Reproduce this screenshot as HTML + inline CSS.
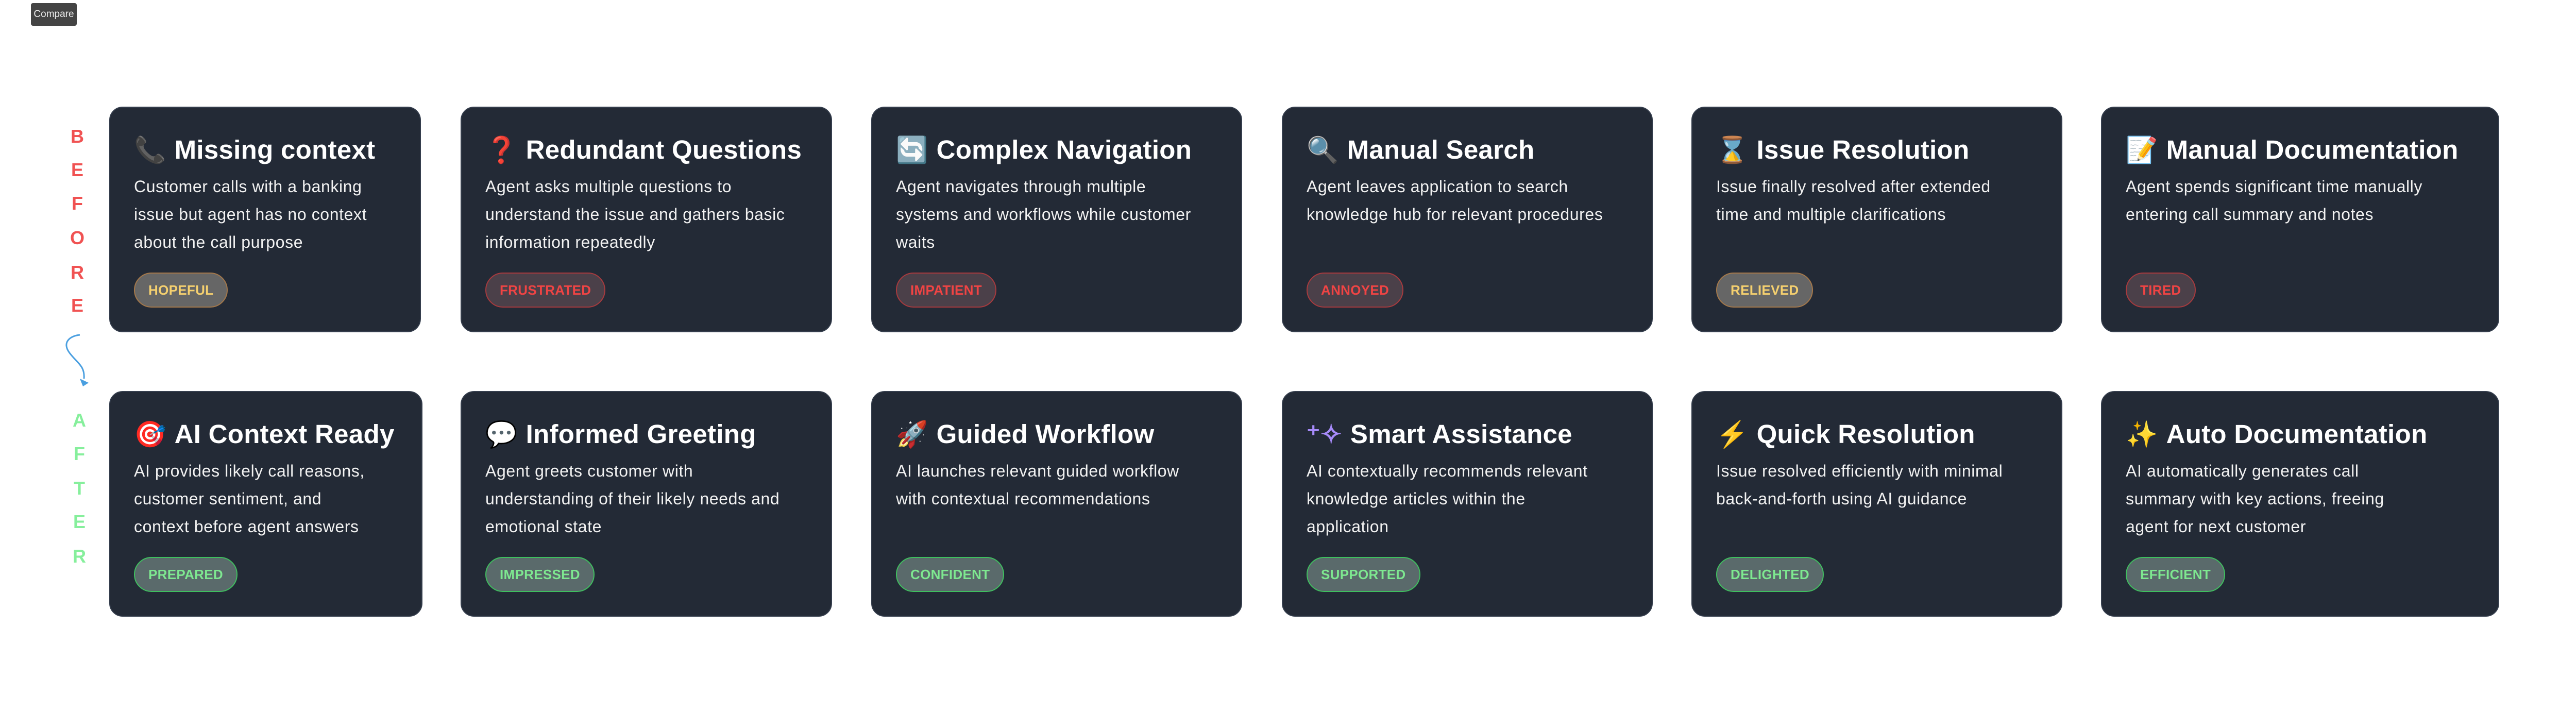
<!DOCTYPE html>
<html><head><meta charset="utf-8">
<style>
html,body{margin:0;padding:0;background:#fff;}
body{width:5040px;height:1382px;position:relative;overflow:hidden;font-family:"Liberation Sans","Noto Sans CJK SC",sans-serif;}
.cmp{position:absolute;left:60px;top:6px;width:89px;height:44px;background:#444;border-radius:4px;color:#eee;font-size:19px;line-height:44px;text-align:center;}
.card{position:absolute;background:#232a36;border:2px solid #343d4c;border-radius:26px;box-sizing:border-box;height:438px;}
.t{position:absolute;left:46px;top:52px;font-size:51px;font-weight:bold;color:#fff;line-height:60px;white-space:nowrap;letter-spacing:0.3px;}
.t .e{font-size:50px;margin-right:16px;}
.d{position:absolute;left:46px;top:126px;font-size:32px;line-height:54px;color:#f2f2f2;white-space:nowrap;letter-spacing:0.6px;}
.b{position:absolute;left:46px;top:320px;height:64px;line-height:64px;padding:0 26px;border-radius:34px;font-size:26px;font-weight:bold;letter-spacing:0.3px;border:2px solid;}
.y{background:#666;border-color:#a5784a;color:#f5d06f;}
.r{background:#4b4049;border-color:#a83a3e;color:#f04444;}
.g{background:#5a6a6b;border-color:#3fbf5f;color:#7ee890;}
.L{position:absolute;font-size:36px;font-weight:bold;width:40px;text-align:center;}
</style></head><body>
<div class="cmp">Compare</div>

<div class="L" style="left:130px;top:244px;color:#f05252">B</div>
<div class="L" style="left:130px;top:309px;color:#f05252">E</div>
<div class="L" style="left:130px;top:374px;color:#f05252">F</div>
<div class="L" style="left:130px;top:441px;color:#f05252">O</div>
<div class="L" style="left:130px;top:508px;color:#f05252">R</div>
<div class="L" style="left:130px;top:572px;color:#f05252">E</div>
<svg style="position:absolute;left:115px;top:640px" width="70" height="115" viewBox="0 0 70 115">
<path d="M40 10 C20 12 5 25 20 45 C35 65 50 70 48 95" fill="none" stroke="#4a9fe0" stroke-width="3"/>
<path d="M40 95 L57 103 L46 110 Z" fill="#4a9fe0"/>
</svg>
<div class="L" style="left:134px;top:795px;color:#86ef9c">A</div>
<div class="L" style="left:134px;top:860px;color:#86ef9c">F</div>
<div class="L" style="left:134px;top:927px;color:#86ef9c">T</div>
<div class="L" style="left:134px;top:992px;color:#86ef9c">E</div>
<div class="L" style="left:134px;top:1059px;color:#86ef9c">R</div>

<div class="card" style="left:212px;top:207px;width:605px">
<div class="t"><span class="e">📞</span>Missing context</div>
<div class="d">Customer calls with a banking<br>issue but agent has no context<br>about the call purpose</div>
<div class="b y">HOPEFUL</div></div>

<div class="card" style="left:894px;top:207px;width:721px">
<div class="t"><span class="e">❓</span>Redundant Questions</div>
<div class="d">Agent asks multiple questions to<br>understand the issue and gathers basic<br>information repeatedly</div>
<div class="b r">FRUSTRATED</div></div>

<div class="card" style="left:1691px;top:207px;width:720px">
<div class="t"><span class="e">🔄</span>Complex Navigation</div>
<div class="d">Agent navigates through multiple<br>systems and workflows while customer<br>waits</div>
<div class="b r">IMPATIENT</div></div>

<div class="card" style="left:2488px;top:207px;width:720px">
<div class="t"><span class="e">🔍</span>Manual Search</div>
<div class="d">Agent leaves application to search<br>knowledge hub for relevant procedures</div>
<div class="b r">ANNOYED</div></div>

<div class="card" style="left:3283px;top:207px;width:720px">
<div class="t"><span class="e">⌛</span>Issue Resolution</div>
<div class="d">Issue finally resolved after extended<br>time and multiple clarifications</div>
<div class="b y">RELIEVED</div></div>

<div class="card" style="left:4078px;top:207px;width:773px">
<div class="t"><span class="e">📝</span>Manual Documentation</div>
<div class="d">Agent spends significant time manually<br>entering call summary and notes</div>
<div class="b r">TIRED</div></div>

<div class="card" style="left:212px;top:759px;width:608px">
<div class="t"><span class="e">🎯</span>AI Context Ready</div>
<div class="d">AI provides likely call reasons,<br>customer sentiment, and<br>context before agent answers</div>
<div class="b g">PREPARED</div></div>

<div class="card" style="left:894px;top:759px;width:721px">
<div class="t"><span class="e">💬</span>Informed Greeting</div>
<div class="d">Agent greets customer with<br>understanding of their likely needs and<br>emotional state</div>
<div class="b g">IMPRESSED</div></div>

<div class="card" style="left:1691px;top:759px;width:720px">
<div class="t"><span class="e">🚀</span>Guided Workflow</div>
<div class="d">AI launches relevant guided workflow<br>with contextual recommendations</div>
<div class="b g">CONFIDENT</div></div>

<div class="card" style="left:2488px;top:759px;width:720px">
<div class="t"><span class="e" style="color:#a78bfa">⁺✧</span>Smart Assistance</div>
<div class="d">AI contextually recommends relevant<br>knowledge articles within the<br>application</div>
<div class="b g">SUPPORTED</div></div>

<div class="card" style="left:3283px;top:759px;width:720px">
<div class="t"><span class="e" style="color:#f5c518">⚡</span>Quick Resolution</div>
<div class="d">Issue resolved efficiently with minimal<br>back-and-forth using AI guidance</div>
<div class="b g">DELIGHTED</div></div>

<div class="card" style="left:4078px;top:759px;width:773px">
<div class="t"><span class="e" style="color:#f5c518">✨</span>Auto Documentation</div>
<div class="d">AI automatically generates call<br>summary with key actions, freeing<br>agent for next customer</div>
<div class="b g">EFFICIENT</div></div>
</body></html>
